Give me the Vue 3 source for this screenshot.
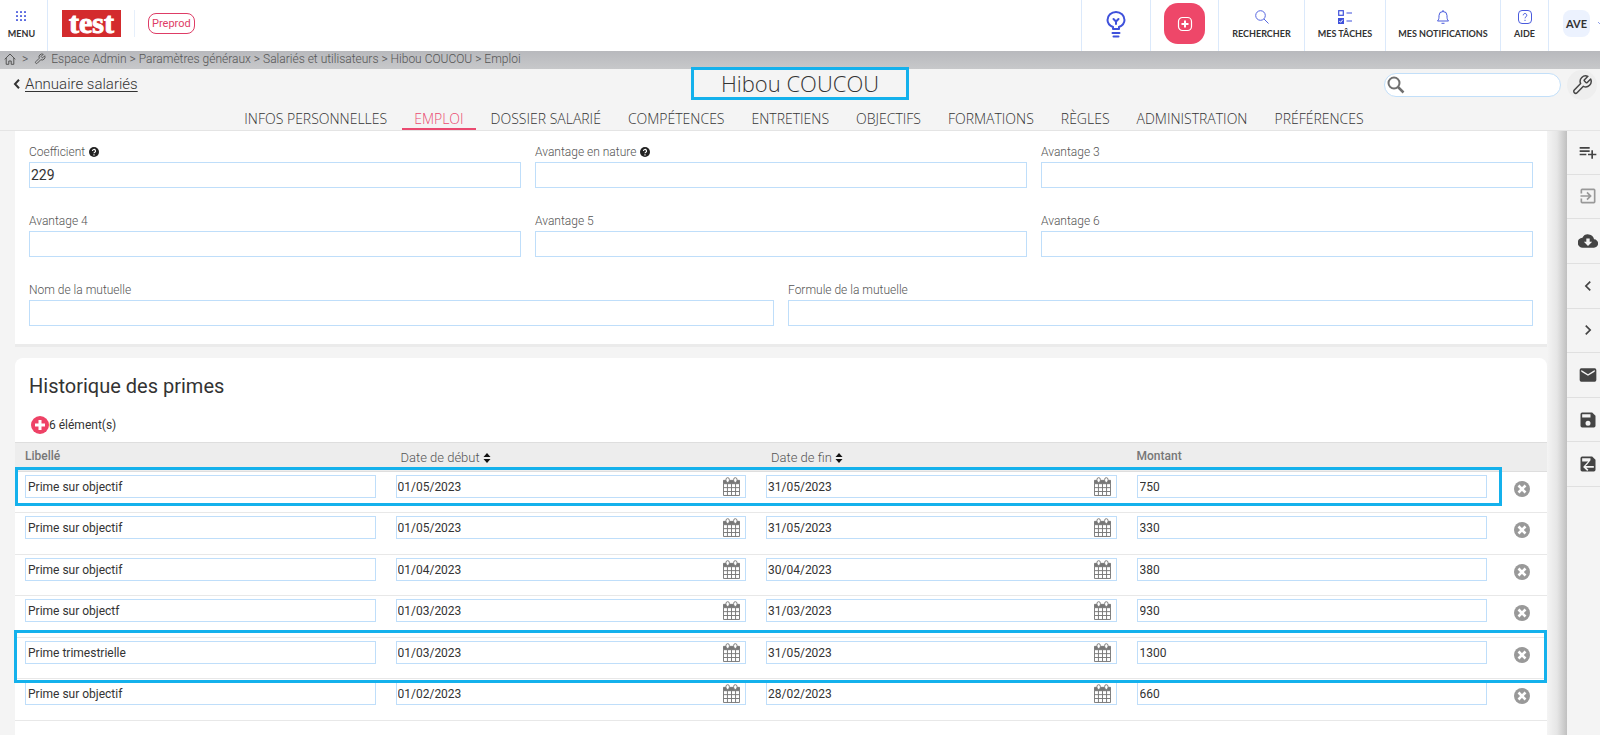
<script setup>
import { ref } from 'vue'

const crumbs = ['Espace Admin', 'Paramètres généraux', 'Salariés et utilisateurs', 'Hibou COUCOU', 'Emploi']

const tabs = [
  'INFOS PERSONNELLES', 'EMPLOI', 'DOSSIER SALARIÉ', 'COMPÉTENCES', 'ENTRETIENS',
  'OBJECTIFS', 'FORMATIONS', 'RÈGLES', 'ADMINISTRATION', 'PRÉFÉRENCES',
]
const activeTab = ref('EMPLOI')

const fields = ref([
  { id: 'coefficient', label: 'Coefficient', value: '229', help: true },
  { id: 'nature', label: 'Avantage en nature', value: '', help: true },
  { id: 'avantage3', label: 'Avantage 3', value: '' },
  { id: 'avantage4', label: 'Avantage 4', value: '' },
  { id: 'avantage5', label: 'Avantage 5', value: '' },
  { id: 'avantage6', label: 'Avantage 6', value: '' },
  { id: 'mutuelle', label: 'Nom de la mutuelle', value: '', wide: true },
  { id: 'formule', label: 'Formule de la mutuelle', value: '', wide: true },
])

const primes = ref([
  { label: 'Prime sur objectif', start: '01/05/2023', end: '31/05/2023', amount: '750' },
  { label: 'Prime sur objectif', start: '01/05/2023', end: '31/05/2023', amount: '330' },
  { label: 'Prime sur objectif', start: '01/04/2023', end: '30/04/2023', amount: '380' },
  { label: 'Prime sur objectf', start: '01/03/2023', end: '31/03/2023', amount: '930' },
  { label: 'Prime trimestrielle', start: '01/03/2023', end: '31/05/2023', amount: '1300' },
  { label: 'Prime sur objectif', start: '01/02/2023', end: '28/02/2023', amount: '660' },
])

const tools = [
  { name: 'Ajouter à la liste', path: 'M14 10H2v2h12v-2zm0-4H2v2h12V6zm4 8v-4h-2v4h-4v2h4v4h2v-4h4v-2h-4zM2 16h8v-2H2v2z' },
  { name: 'Entrer', soft: true, path: 'M10.1 15.6 11.5 17l5-5-5-5-1.4 1.4 2.6 2.6H3v2h9.7l-2.6 2.6zM19 3H5a2 2 0 0 0-2 2v4h2V5h14v14H5v-4H3v4a2 2 0 0 0 2 2h14a2 2 0 0 0 2-2V5a2 2 0 0 0-2-2z' },
  { name: 'Télécharger', path: 'M19.3 10A7.5 7.5 0 0 0 5.300 8 6 6 0 0 0 6 20h13a5 5 0 0 0 .3-10zM17 13l-5 5-5-5h3V9h4v4h3z' },
  { name: 'Précédent', path: 'M15.400 7.400 14 6l-6 6 6 6 1.400-1.400L10.800 12z' },
  { name: 'Suivant', path: 'M10 6 8.600 7.400l4.600 4.600-4.600 4.600L10 18l6-6z' },
  { name: 'Envoyer un courriel', path: 'M20 4H4a2 2 0 0 0-2 2v12a2 2 0 0 0 2 2h16a2 2 0 0 0 2-2V6a2 2 0 0 0-2-2zm0 4-8 5-8-5V6l8 5 8-5v2z' },
  { name: 'Enregistrer', path: 'M17 3H5a2 2 0 0 0-2 2v14a2 2 0 0 0 2 2h14a2 2 0 0 0 2-2V7l-4-4zm-5 16a3 3 0 1 1 0-6 3 3 0 0 1 0 6zm3-10H5V5h10v4z' },
  { name: 'Enregistrer et revenir', path: 'M17 3H5a2 2 0 0 0-2 2v14a2 2 0 0 0 2 2h14a2 2 0 0 0 2-2V7l-4-4zM5 5h10v2.500L11 12.500l-2 2h10v2h-9l2.500 2.500-1.400 1.400-5-4.900 6-6.500H5V5z' },
]

const wrench = 'M14.700 6.300a1 1 0 0 0 0 1.400l1.600 1.600a1 1 0 0 0 1.400 0l3.770-3.770a6 6 0 0 1-7.940 7.940l-6.910 6.910a2.120 2.120 0 0 1-3-3l6.910-6.910a6 6 0 0 1 7.940-7.940l-3.760 3.760z'
</script>

<template>
  <div class="app">
    <header class="topbar">
      <button class="cell menu" type="button">
        <svg class="ico" viewBox="0 0 14 14" aria-hidden="true">
          <g fill="#5a69e0">
            <template v-for="r in 3" :key="r">
              <rect v-for="c in 3" :key="c" :x="c * 4 - 3" :y="r * 4 - 3" width="2" height="2" rx=".6" />
            </template>
          </g>
        </svg>
        <span>MENU</span>
      </button>
      <a class="logo" href="#">test</a>
      <span class="divider"></span>
      <span class="env">Preprod</span>

      <nav class="actions">
        <button class="cell idea" type="button" aria-label="Idées">
          <svg width="20" height="27" viewBox="0 0 20 27" fill="none" stroke="#3f51db" stroke-width="2" stroke-linecap="round">
            <path d="M7 18v-2C3.500 14.500 1.500 12 1.500 9a8.500 8 0 0 1 17 0c0 3-2 5.500-5.500 7v2z" stroke-linejoin="round" />
            <path d="M10 13v-2.500M7.500 8 10 10.500 12.500 8M6.500 22h7M7.500 25.500h5" />
          </svg>
        </button>
        <button class="cell create" type="button" aria-label="Créer">
          <span class="create-box">
            <svg width="16" height="16" viewBox="0 0 16 16" fill="none" stroke="#fff">
              <rect x="1.500" y="1.500" width="13" height="13" rx="4" stroke-width="1.200" />
              <path d="M8 4.500v7M4.500 8h7" stroke-width="2" />
            </svg>
          </span>
        </button>
        <button class="cell search-cell" type="button">
          <svg class="ico" viewBox="0 0 14 14" fill="none" stroke="#5767e0"><circle cx="5.500" cy="5.500" r="4.800" /><path d="m9 9 4.500 4.500" /></svg>
          <span>RECHERCHER</span>
        </button>
        <button class="cell tasks-cell" type="button">
          <svg class="ico" viewBox="0 0 14 14" fill="none" stroke="#3f51db">
            <rect x=".7" y=".7" width="4.600" height="4.600" stroke-width="1.200" />
            <rect x="0" y="8" width="6" height="6" fill="#3f51db" stroke="none" />
            <path d="m1.300 11 1.300 1.300 2.200-2.600" stroke="#fff" />
            <path d="M8.500 3H14M8.500 11H14" stroke-width="1.200" />
          </svg>
          <span>MES TÂCHES</span>
        </button>
        <button class="cell notif-cell" type="button">
          <svg class="ico" viewBox="0 0 14 14" fill="none" stroke="#4a5bdd"><path d="M1.500 11C3 9.500 3 8 3 5.500a4 4 0 0 1 8 0C11 8 11 9.500 12.500 11zM5.500 13.300h3M7 1.500V0" /></svg>
          <span>MES NOTIFICATIONS</span>
        </button>
        <button class="cell help-cell" type="button">
          <svg class="ico" viewBox="0 0 14 14" fill="none" stroke="#4a5bdd"><rect x=".5" y=".5" width="13" height="13" rx="3.500" /><path d="M5.200 5.300a1.800 1.800 0 1 1 2.800 1.500c-.7.500-1 .8-1 1.500M7 9.800v1.200" /></svg>
          <span>AIDE</span>
        </button>
        <button class="cell user-cell" type="button">
          <span class="avatar">AVE</span>
          <svg width="8" height="6" viewBox="0 0 8 6" fill="none" stroke="#8fa0ea"><path d="m0 1 4 4 4-4" /></svg>
        </button>
      </nav>
    </header>

    <nav class="crumbs" aria-label="Fil d'Ariane">
      <svg width="12" height="12" viewBox="0 0 12 12" fill="none" stroke="#555"><path d="M.7 6.300 6 1l5.300 5.300M2.200 5v6.300h2.600V8h2.400v3.300h2.600V5" /></svg>
      <span class="sep">&gt;</span>
      <svg width="12" height="12" viewBox="0 0 24 24" fill="none" stroke="#555" stroke-width="2"><path :d="wrench" /></svg>
      <span class="trail">
        <template v-for="(c, i) in crumbs" :key="c"><template v-if="i"> &gt; </template><a href="#">{{ c }}</a></template>
      </span>
    </nav>

    <section class="heading">
      <div class="heading-row">
        <div class="back">
          <svg width="7" height="10" viewBox="0 0 7 10" fill="none" stroke="#333" stroke-width="2"><path d="M6 .8 2 5l4 4.200" /></svg>
          <a href="#">Annuaire salariés</a>
        </div>
        <h1>Hibou COUCOU</h1>
        <div class="finder">
          <label class="search">
            <svg width="18" height="18" viewBox="0 0 18 18" fill="none" stroke="#707070"><circle cx="7" cy="7" r="5.500" stroke-width="2" /><path d="m11 11 5.500 5.500" stroke-width="2.500" /></svg>
            <input type="search" aria-label="Rechercher un salarié" />
          </label>
          <button class="settings" type="button" aria-label="Réglages">
            <svg width="22" height="22" viewBox="0 0 24 24" fill="none" stroke="#444" stroke-width="1.600" stroke-linejoin="round"><path :d="wrench" /></svg>
          </button>
        </div>
      </div>
      <nav class="tabs">
        <a v-for="t in tabs" :key="t" href="#" :class="{ active: t === activeTab }" @click.prevent="activeTab = t">{{ t }}</a>
      </nav>
    </section>

    <div class="body">
      <main class="content">
        <section class="card form">
          <div v-for="f in fields" :key="f.id" class="field" :class="{ wide: f.wide }">
            <label :for="f.id">
              {{ f.label }}
              <svg v-if="f.help" width="10" height="10" viewBox="0 0 10 10" aria-hidden="true"><circle cx="5" cy="5" r="5" fill="#222" /><path d="M3.500 4a1.500 1.500 0 1 1 2.300 1.200c-.6.300-.8.500-.8 1M5 7.200v1.200" fill="none" stroke="#fff" stroke-width="1.200" /></svg>
            </label>
            <input :id="f.id" v-model="f.value" type="text" />
          </div>
        </section>

        <section class="card history">
          <h2>Historique des primes</h2>
          <div class="count">
            <button type="button" aria-label="Ajouter une prime">
              <svg width="18" height="18" viewBox="0 0 18 18"><circle cx="9" cy="9" r="9" fill="#ee4266" /><path d="M9 4v10M4 9h10" stroke="#fff" stroke-width="3" /></svg>
            </button>
            <span>{{ primes.length }} élément(s)</span>
          </div>
          <div class="table-wrap">
            <table>
              <thead>
                <tr>
                  <th>Libellé</th>
                  <th v-for="h in ['Date de début', 'Date de fin']" :key="h" class="sortable">
                    {{ h }}
                    <svg width="8" height="10" viewBox="0 0 8 10" fill="#111"><path d="M4 0 7.500 4H.5zM4 10 .5 6h7z" /></svg>
                  </th>
                  <th>Montant</th>
                  <th class="narrow"></th>
                </tr>
              </thead>
              <tbody>
                <tr v-for="(p, i) in primes" :key="i">
                  <td><input v-model="p.label" type="text" aria-label="Libellé" /></td>
                  <td v-for="k in ['start', 'end']" :key="k">
                    <div class="date">
                      <input v-model="p[k]" type="text" :aria-label="k === 'start' ? 'Date de début' : 'Date de fin'" />
                      <button type="button" aria-label="Ouvrir le calendrier">
                        <svg width="17" height="19" viewBox="0 0 18 20" fill="none" stroke="#777">
                          <path d="M.5 3.500h17V7H.5z" fill="#777" />
                          <path d="M.5 7v12.500h17V7M.5 11.200h17M.5 15.300h17M4.700 7v12.500M9 7v12.500M13.300 7v12.500" />
                          <rect x="3.200" y=".7" width="3.500" height="5" rx="1.700" fill="#fff" /><rect x="11.300" y=".7" width="3.500" height="5" rx="1.700" fill="#fff" />
                        </svg>
                      </button>
                    </div>
                  </td>
                  <td><input v-model="p.amount" type="text" aria-label="Montant" /></td>
                  <td class="narrow">
                    <button class="remove" type="button" aria-label="Supprimer">
                      <svg width="16" height="16" viewBox="0 0 16 16"><circle cx="8" cy="8" r="8" fill="#999" /><path d="m4.500 4.500 7 7m0-7-7 7" stroke="#fff" stroke-width="2.600" /></svg>
                    </button>
                  </td>
                </tr>
              </tbody>
            </table>
            <div class="mark mark-first"></div>
            <div class="mark mark-quarter"></div>
          </div>
        </section>
      </main>

      <aside class="tools">
        <button v-for="t in tools" :key="t.name" type="button" :aria-label="t.name" :class="{ soft: t.soft }">
          <svg width="20" height="20" viewBox="0 0 24 24" fill="currentColor"><path :d="t.path" fill-rule="evenodd" /></svg>
        </button>
      </aside>
    </div>
  </div>
</template>

<style>
body {
  margin: 0;
  background: #f4f4f4;
}
</style>

<style scoped>
.app {
  display: flex;
  flex-direction: column;
  min-height: 100vh;
  overflow: hidden;
  font-family: Roboto, "Liberation Sans", sans-serif;
  font-size: 12px;
  color: #333;
}
.app *, .app {
  box-sizing: border-box;
}
button {
  padding: 0;
  border: 0;
  background: none;
  color: inherit;
  font: inherit;
}
svg {
  display: block;
  flex: none;
}
a {
  color: inherit;
  text-decoration: none;
}
input {
  font-family: inherit;
  color: #333;
  border: 1px solid #bfdefa;
  border-radius: 0;
  background: #fff;
  outline: 0;
}

.topbar {
  display: flex;
  align-items: center;
  height: 51px;
  background: #fff;
}
.cell {
  display: flex;
  flex-direction: column;
  align-items: center;
  height: 51px;
  padding-top: 10px;
  gap: 4px;
  border-left: 1px solid #dbe9fb;
  font: 700 9px/12px Lato, sans-serif;
  color: #333;
  white-space: nowrap;
}
.ico {
  width: 14px;
  height: 14px;
}
.menu {
  width: 48px;
  border-left: 0;
  border-right: 1px solid #dbe9fb;
  padding-right: 4px;
}
.logo {
  margin-left: 14px;
  width: 59px;
  height: 27px;
  margin-bottom: 4px;
  background: #d32b2d;
  color: #fff;
  font: 700 30px/25px "Liberation Serif", serif;
  text-align: center;
  -webkit-text-stroke: 1px #fff;
}
.divider {
  width: 1px;
  height: 27px;
  margin: 0 13px 4px;
  background: #e6effb;
}
.env {
  padding: 0 3px;
  margin-bottom: 4px;
  border: 1px solid #de3c66;
  border-radius: 8px;
  color: #de3c66;
  font-size: 11px;
  line-height: 19px;
}
.actions {
  display: flex;
  margin-left: auto;
}
.idea { width: 69px; padding-top: 11px; }
.create { width: 68px; padding-top: 3px; }
.search-cell { width: 86px; }
.tasks-cell { width: 81px; }
.notif-cell { width: 115px; }
.help-cell { width: 48px; }
.user-cell {
  flex-direction: row;
  align-items: center;
  gap: 8px;
  width: 52px;
  padding: 0 0 4px 14px;
  overflow: hidden;
}
.create-box {
  display: grid;
  place-items: center;
  width: 41px;
  height: 41px;
  border-radius: 14px;
  background: #ee4769;
}
.avatar {
  flex: none;
  width: 27px;
  border-radius: 8px;
  background: #ecf2fe;
  font-size: 11px;
  line-height: 27px;
}

.crumbs {
  display: flex;
  align-items: center;
  height: 18px;
  padding: 0 0 2px 4px;
  background: linear-gradient(#b8b9bd, #c7c8ca);
  color: #555;
  font-size: 12px;
  font-weight: 300;
}
.sep {
  margin: 0 6px;
}
.trail {
  margin-left: 5px;
}

.heading {
  border-bottom: 1px solid #e4e4e4;
  background: #f4f4f4;
}
.heading-row {
  display: grid;
  grid-template-columns: 1fr auto 1fr;
  height: 32px;
}
.back {
  display: flex;
  align-items: center;
  gap: 5px;
  padding: 0 0 2px 13px;
  font-size: 15px;
  font-weight: 300;
}
.back a {
  text-decoration: underline;
  text-underline-offset: 2px;
}
h1 {
  width: 218px;
  height: 33px;
  margin: -2px 0 0;
  border: 3px solid #14b1ec;
  font: 300 22px/26px "Open Sans", sans-serif;
  text-align: center;
  white-space: nowrap;
  position: relative;
}
.finder {
  display: flex;
  justify-content: flex-end;
  align-items: center;
  gap: 6px;
  padding-right: 3px;
}
.search {
  display: flex;
  align-items: center;
  width: 177px;
  height: 24px;
  padding-left: 2px;
  border: 1px solid #c2dff9;
  border-radius: 12px;
  background: #fff;
}
.search input {
  flex: 1;
  min-width: 0;
  border: 0;
  background: none;
}
.settings {
  display: grid;
  place-items: center;
  width: 30px;
  height: 30px;
  border-radius: 50%;
  background: #eee;
}
.tabs {
  display: flex;
  justify-content: center;
  gap: 3px;
  margin-right: 4px;
  margin-left: 12px;
  font: 300 14px/22px "Open Sans", sans-serif;
}
.tabs a {
  height: 29px;
  padding: 8px 12px 0;
  border-bottom: 2px solid transparent;
  line-height: 20px;
  white-space: nowrap;
}
.tabs .active {
  border-color: #ea4a70;
  color: #ea4a70;
}

.body {
  display: flex;
  flex: 1;
}
.content {
  display: flex;
  flex-direction: column;
  flex: 1;
  min-width: 0;
  padding: 0 20px 0 15px;
  background: linear-gradient(to right, #f4f4f4, #e6e6e6 10px, #c0c0c0 20px) right / 20px 100% no-repeat #f4f4f4;
}
.card {
  background: #fff;
}
.form {
  display: grid;
  grid-template-columns: repeat(6, 1fr);
  gap: 24px 14px;
  padding: 12px 14px 18px;
  border-bottom: 3px solid #ebebeb;
}
.field {
  grid-column: span 2;
}
.wide {
  grid-column: span 3;
}
.field label {
  display: flex;
  align-items: center;
  gap: 4px;
  height: 18px;
  margin-bottom: 1px;
  color: #555;
  font-weight: 300;
}
.field input {
  display: block;
  width: 100%;
  height: 26px;
  padding: 0 1px;
  font-size: 14px;
}
.history {
  flex: 1;
  margin-top: 11px;
  border-radius: 8px 8px 0 0;
}
h2 {
  margin: 0;
  padding: 16px 14px 0;
  font-size: 20px;
  font-weight: 400;
  line-height: 24px;
}
.count {
  display: flex;
  align-items: center;
  height: 18px;
  margin: 18px 16px 8px;
}
.table-wrap {
  position: relative;
}
table {
  width: 100%;
  table-layout: fixed;
  border-collapse: collapse;
}
th {
  height: 29px;
  padding: 0 10px 2px;
  border: solid #dedede;
  border-width: 1px 0;
  background: #ededed;
  color: #777;
  font-weight: 500;
  text-align: left;
}
.sortable {
  padding: 0 15px;
  font-size: 13px;
  font-weight: 300;
  color: #555;
}
.sortable svg {
  display: inline-block;
  vertical-align: -1px;
}
.narrow {
  width: 50px;
}
td {
  height: 41px;
  padding: 3px 10px 0;
  border-bottom: 1px solid #e8e8e8;
  vertical-align: top;
}
tr:nth-child(even) td {
  height: 42px;
}
td input {
  display: block;
  width: 100%;
  height: 23px;
  padding: 0 2px;
  font-size: 12px;
}
.date {
  display: flex;
  align-items: center;
  padding-right: 5px;
  border: 1px solid #bfdefa;
}
.date input {
  flex: 1;
  min-width: 0;
  height: 21px;
  padding: 0 1px;
  border: 0;
}
td.narrow {
  padding: 9px 16px 0 17px;
}
.mark {
  position: absolute;
  border: 3px solid #14b1ec;
  pointer-events: none;
}
.mark-first {
  top: 25px;
  left: 0;
  right: 45px;
  height: 39px;
}
.mark-quarter {
  top: 188px;
  left: -1px;
  right: 0;
  height: 53px;
}

.tools {
  display: grid;
  grid-template-rows: repeat(8, 1fr);
  align-self: flex-start;
  width: 33px;
  height: 357px;
  margin-top: -1px;
}
.tools button {
  display: flex;
  align-items: center;
  justify-content: flex-end;
  padding-right: 2px;
  border-bottom: 1px solid #e0e0e0;
  color: #444;
}
.tools .soft {
  color: #999;
}
</style>
